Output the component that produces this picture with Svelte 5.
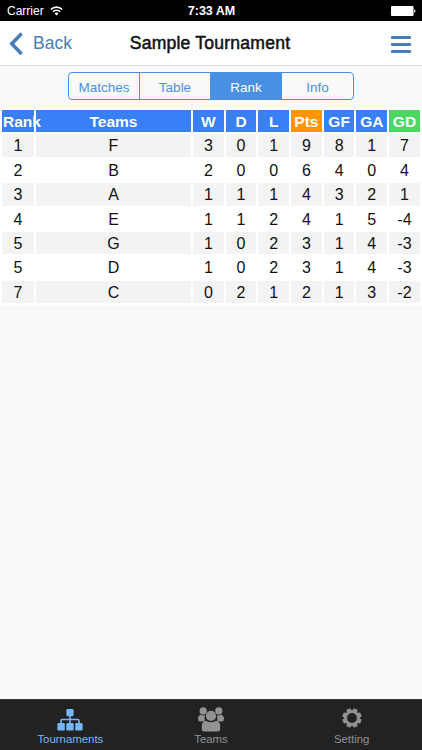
<script>
    let selectedSegment = 'Rank';
    let selectedTab = 'Tournaments';

    const segments = ['Matches', 'Table', 'Rank', 'Info'];
    const tabs = ['Tournaments', 'Teams', 'Setting'];
    const columns = ['Rank', 'Teams', 'W', 'D', 'L', 'Pts', 'GF', 'GA', 'GD'];

    const rows = [
        [1, 'F', 3, 0, 1, 9, 8, 1, 7],
        [2, 'B', 2, 0, 0, 6, 4, 0, 4],
        [3, 'A', 1, 1, 1, 4, 3, 2, 1],
        [4, 'E', 1, 1, 2, 4, 1, 5, -4],
        [5, 'G', 1, 0, 2, 3, 1, 4, -3],
        [5, 'D', 1, 0, 2, 3, 1, 4, -3],
        [7, 'C', 0, 2, 1, 2, 1, 3, -2]
    ];

    // Gear teeth, one every 45 degrees
    const teeth = [22.5, 67.5, 112.5, 157.5, 202.5, 247.5, 292.5, 337.5];
</script>

<div class="screen">
    <div class="status">
        <div class="carrier">
            <span>Carrier</span>
            <svg width="13" height="10" viewBox="0 0 13 10" fill="none" stroke="#fff" stroke-width="1.6">
                <path d="M.8 3.5a8.1 8.1 0 0 1 11.4 0" />
                <path d="M2.9 5.7a5.1 5.1 0 0 1 7.2 0" />
                <path d="M6.5 9.4L4.5 7.4a2.8 2.8 0 0 1 4 0z" fill="#fff" stroke="none" />
            </svg>
        </div>
        <span class="time">7:33 AM</span>
        <svg class="battery" width="25" height="10" viewBox="0 0 25 10" fill="#fff">
            <rect width="22.5" height="10" rx="1" />
            <path d="M23.2 3.2c1.7.5 1.7 3.1 0 3.6z" />
        </svg>
    </div>

    <header>
        <button class="back">
            <svg width="14" height="24" viewBox="0 0 14 24" fill="none" stroke="#4a7ebb" stroke-width="3.6">
                <path d="M12.6 1.6L2.8 11.8l9.8 10.2" />
            </svg>
            <span>Back</span>
        </button>
        <h1>Sample Tournament</h1>
        <button class="menu" aria-label="Menu">
            <i></i><i></i><i></i>
        </button>
    </header>

    <div class="segmented">
        {#each segments as segment}
            <button class:selected={segment === selectedSegment} on:click={() => (selectedSegment = segment)}>{segment}</button>
        {/each}
    </div>

    <div class="ranking">
        {#each columns as column}
            <div class="head {column.toLowerCase()}">{column}</div>
        {/each}
        {#each rows as row, i}
            {#each row as value}
                <div class="cell" class:odd={i % 2 === 0}>{value}</div>
            {/each}
        {/each}
    </div>

    <nav>
        {#each tabs as tab}
            <button class:active={tab === selectedTab} on:click={() => (selectedTab = tab)}>
                {#if tab === 'Tournaments'}
                    <svg width="26" height="22" viewBox="0 0 26 22" fill="currentColor">
                        <rect x="9.4" y="0" width="7.2" height="7.2" rx="1.2" />
                        <rect x=".4" y="14" width="7.4" height="7.4" rx="1.2" />
                        <rect x="9.3" y="14" width="7.4" height="7.4" rx="1.2" />
                        <rect x="18.2" y="14" width="7.4" height="7.4" rx="1.2" />
                        <path d="M13 6v9M4 15v-3.5q0-1 1-1h16q1 0 1 1V15" fill="none" stroke="currentColor" stroke-width="1.6" />
                    </svg>
                {:else if tab === 'Teams'}
                    <svg width="26" height="25" viewBox="0 0 26 25" fill="currentColor">
                        <circle cx="5.2" cy="3.9" r="3.6" />
                        <circle cx="20.8" cy="3.9" r="3.6" />
                        <path d="M3 7.8Q.1 8.5.1 11.3v1.2q0 2 2 2h4.7Q6 11.5 7.3 8.3Q5 9 3 7.8z" />
                        <path d="M23 7.8q2.9.7 2.9 3.5v1.2q0 2-2 2h-4.7Q20 11.5 18.7 8.3q2.3.7 4.3-.5z" />
                        <circle cx="13" cy="8.9" r="5.1" />
                        <path d="M8 13.7Q3.7 14.6 3.8 19v3q0 2.5 2.5 2.5h13.4q2.5 0 2.5-2.5v-3q.1-4.4-4.2-5.3-5 3-10 0z" />
                    </svg>
                {:else}
                    <svg class="gear" width="20" height="20" viewBox="-10 -10 20 20" fill="currentColor">
                        {#each teeth as angle}
                            <path d="M-2.9-6L-2-9.7h4L2.900-6z" transform="rotate({angle})" />
                        {/each}
                        <circle r="6.2" fill="none" stroke="currentColor" stroke-width="2.5" />
                    </svg>
                {/if}
                <span>{tab}</span>
            </button>
        {/each}
    </nav>
</div>

<style>
    :global(body) {
        margin: 0;
    }

    .screen {
        display: flex;
        flex-direction: column;
        width: 422px;
        height: 750px;
        background: #f9f9f9;
        color: #111;
        font-family: "Liberation Sans", Arial, sans-serif;
        overflow: hidden;
    }

    button {
        padding: 0;
        border: none;
        background: none;
        font-family: inherit;
    }

    .status {
        display: grid;
        grid-template-columns: 1fr auto 1fr;
        align-items: center;
        box-sizing: border-box;
        height: 21px;
        padding: 1px 6px 0 7px;
        background: #000;
        color: #fff;
        font-size: 12px;
        line-height: 20px;
    }

    .carrier {
        display: flex;
        align-items: center;
        gap: 6px;
    }

    .time {
        font-size: 12.5px;
        font-weight: bold;
    }

    .battery {
        justify-self: end;
    }

    header {
        display: grid;
        grid-template-columns: 1fr auto 1fr;
        align-items: center;
        box-sizing: border-box;
        height: 45px;
        padding: 1px 11px 0 9px;
        border-bottom: 1px solid #dedee0;
        background: #fff;
    }

    .back {
        display: flex;
        align-items: center;
        gap: 10px;
        color: #4a7ebb;
        font-size: 17.5px;
    }

    /* medium weight: regular with a thin outline */
    h1 {
        margin: 0;
        font-size: 17.6px;
        font-weight: normal;
        letter-spacing: .2px;
        -webkit-text-stroke: .5px #111;
    }

    .menu {
        display: grid;
        gap: 4px;
        justify-self: end;
        width: 20px;
        margin-top: 1px;
    }

    .menu i {
        height: 3px;
        border-radius: 1px;
        background: #4a7ebb;
    }

    .segmented {
        display: grid;
        grid-template-columns: 70px 71px 71px 1fr;
        box-sizing: border-box;
        width: 286px;
        height: 28px;
        margin: 6px auto 0;
        border: 1px solid #4a90e2;
        border-radius: 4px;
        overflow: hidden;
    }

    .segmented button {
        padding-top: 2px;
        color: #4a90e2;
        font-size: 13.5px;
    }

    .segmented button + button {
        border-left: 1px solid #4a90e2;
    }

    .segmented .selected {
        background: #4990e5;
        color: #fff;
    }

    .ranking {
        display: grid;
        grid-template-columns: 32px 155px repeat(7, 30.7px);
        grid-auto-rows: 22.4px;
        gap: 2px;
        margin-top: 8px;
        padding: 2px 2px 1.5px;
        background: #fff;
        font-size: 16px;
        text-align: center;
    }

    .head {
        background: #397ff5;
        color: #fff;
        font-size: 15.5px;
        font-weight: bold;
        line-height: 23.5px;
    }

    .cell {
        line-height: 23.6px;
    }

    .rank {
        position: relative;
        text-indent: 1px;
    }

    .pts {
        background: #ff9500;
    }

    .gd {
        background: #4cd763;
    }

    .odd {
        background: #f3f3f3;
    }

    nav {
        display: grid;
        grid-template-columns: repeat(3, 1fr);
        box-sizing: border-box;
        height: 51px;
        margin-top: auto;
        border-top: 1px solid #3a3a3a;
        background: #222;
    }

    nav button {
        display: grid;
        grid-template-rows: 32px 14px;
        justify-items: center;
        align-items: center;
        align-content: start;
        color: #929292;
        font-size: 11.4px;
    }

    nav svg {
        margin-top: 7px;
    }

    nav .gear {
        margin-top: 4px;
    }

    nav .active {
        color: #74b8fa;
    }
</style>
